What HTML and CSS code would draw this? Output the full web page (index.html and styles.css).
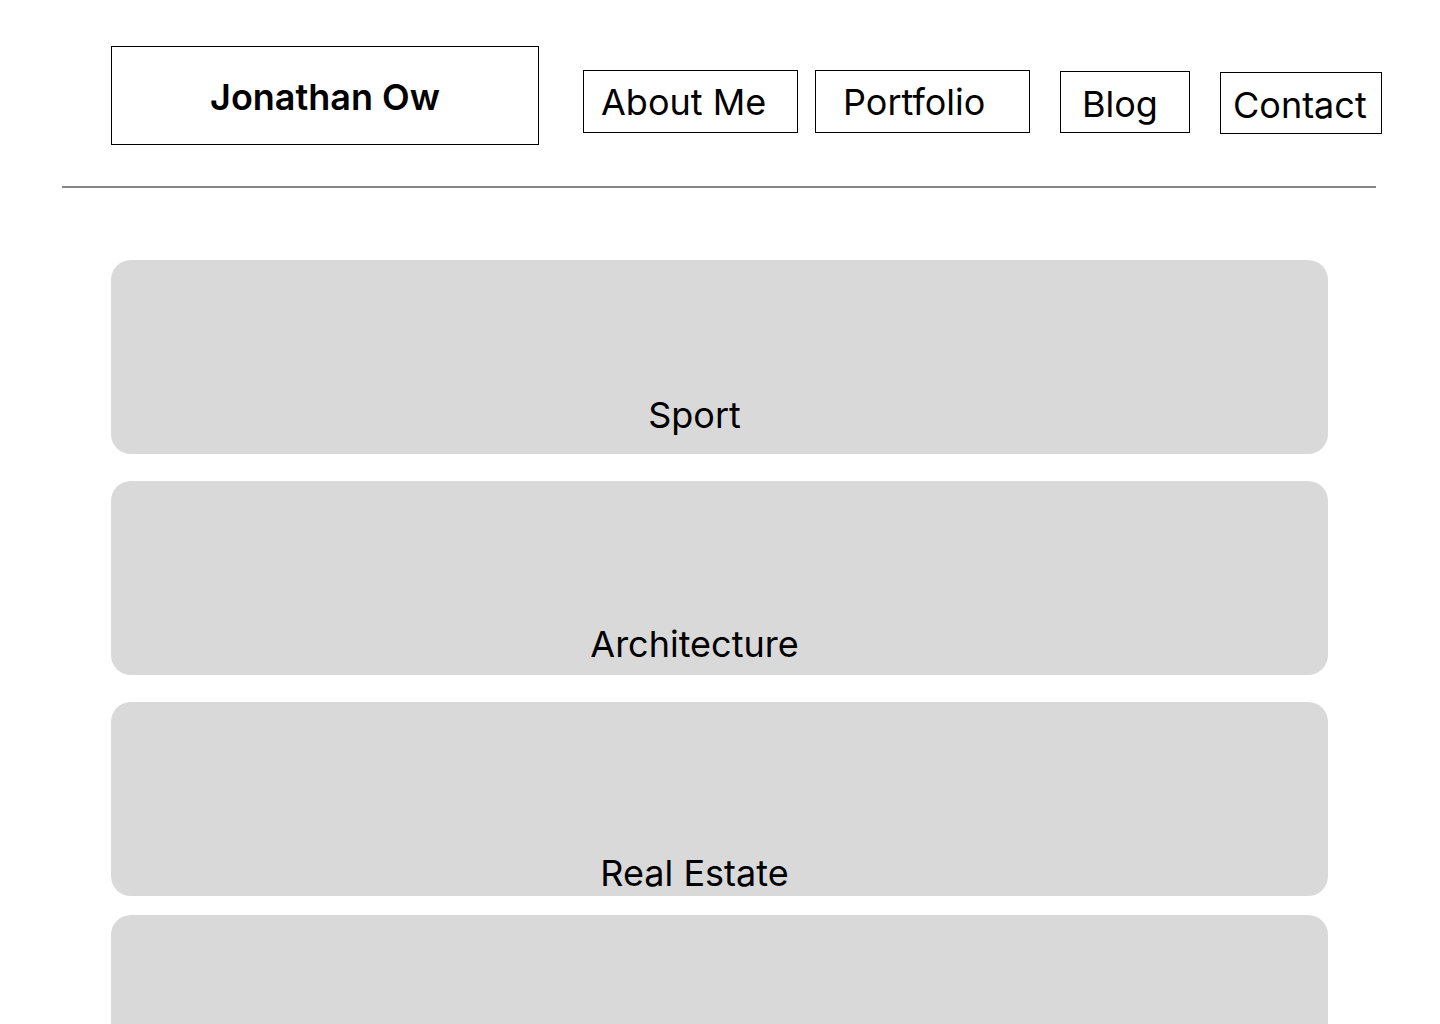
FILE: index.html
```html
<!DOCTYPE html>
<html lang="en">
<head>
<meta charset="utf-8">
<title>Jonathan Ow</title>
<link rel="stylesheet" href="styles.css">
</head>
<body>
<header class="header">
  <div class="logo">Jonathan Ow</div>
  <nav class="nav">
    <a class="nav-item nav-about" href="#">About Me</a>
    <a class="nav-item nav-portfolio" href="#">Portfolio</a>
    <a class="nav-item nav-blog" href="#">Blog</a>
    <a class="nav-item nav-contact" href="#">Contact</a>
  </nav>
</header>
<hr class="divider">
<main class="cards">
  <section class="card card-sport"><span class="card-label">Sport</span></section>
  <section class="card card-arch"><span class="card-label">Architecture</span></section>
  <section class="card card-real"><span class="card-label">Real Estate</span></section>
  <section class="card card-last"></section>
</main>
</body>
</html>
```
FILE: styles.css
```css
* { box-sizing: border-box; }
html, body { margin: 0; padding: 0; background: #fff; }
body {
  font-family: Inter, "Noto Sans", sans-serif;
  color: #000;
}
.header {
  display: flex;
  align-items: flex-start;
  padding: 46px 0 0 111px;
}
.logo {
  width: 428px;
  height: 99px;
  border: 1px solid #000;
  display: flex;
  align-items: center;
  justify-content: center;
  font-size: 36px;
  font-weight: 600;
  line-height: 1;
  padding: 3px 0 0 0;
}
.nav { display: flex; align-items: flex-start; }
.nav-item {
  display: flex;
  align-items: center;
  border: 1px solid #000;
  color: #000;
  text-decoration: none;
  font-size: 36px;
  line-height: 1;
}
.nav-about { margin: 24px 0 0 44px; width: 215px; height: 63px; padding: 1px 0 0 17px; }
.nav-portfolio { margin: 24px 0 0 17px; width: 215px; height: 63px; padding: 1px 0 0 27px; }
.nav-blog { margin: 25px 0 0 30px; width: 130px; height: 62px; padding: 4px 0 0 21px; }
.nav-contact { margin: 26px 0 0 30px; width: 162px; height: 62px; padding: 4px 0 0 12px; }
.divider {
  margin: 41px 0 0 62px;
  width: 1314px;
  border: 0;
  height: 2px;
  background: #858585;
}
.cards {
  display: flex;
  flex-direction: column;
  padding: 72px 0 0 111px;
}
.card {
  width: 1217px;
  height: 194px;
  background: #d9d9d9;
  border-radius: 20px;
  display: flex;
  justify-content: center;
  align-items: flex-end;
  padding-right: 50px;
  flex-shrink: 0;
}
.card + .card { margin-top: 27px; }
.card-last { margin-top: 19px !important; }
.card-label { font-size: 36px; line-height: 1; }
.card-sport { padding-bottom: 21px; }
.card-arch { padding-bottom: 13px; }
.card-real { padding-bottom: 5px; }
```
